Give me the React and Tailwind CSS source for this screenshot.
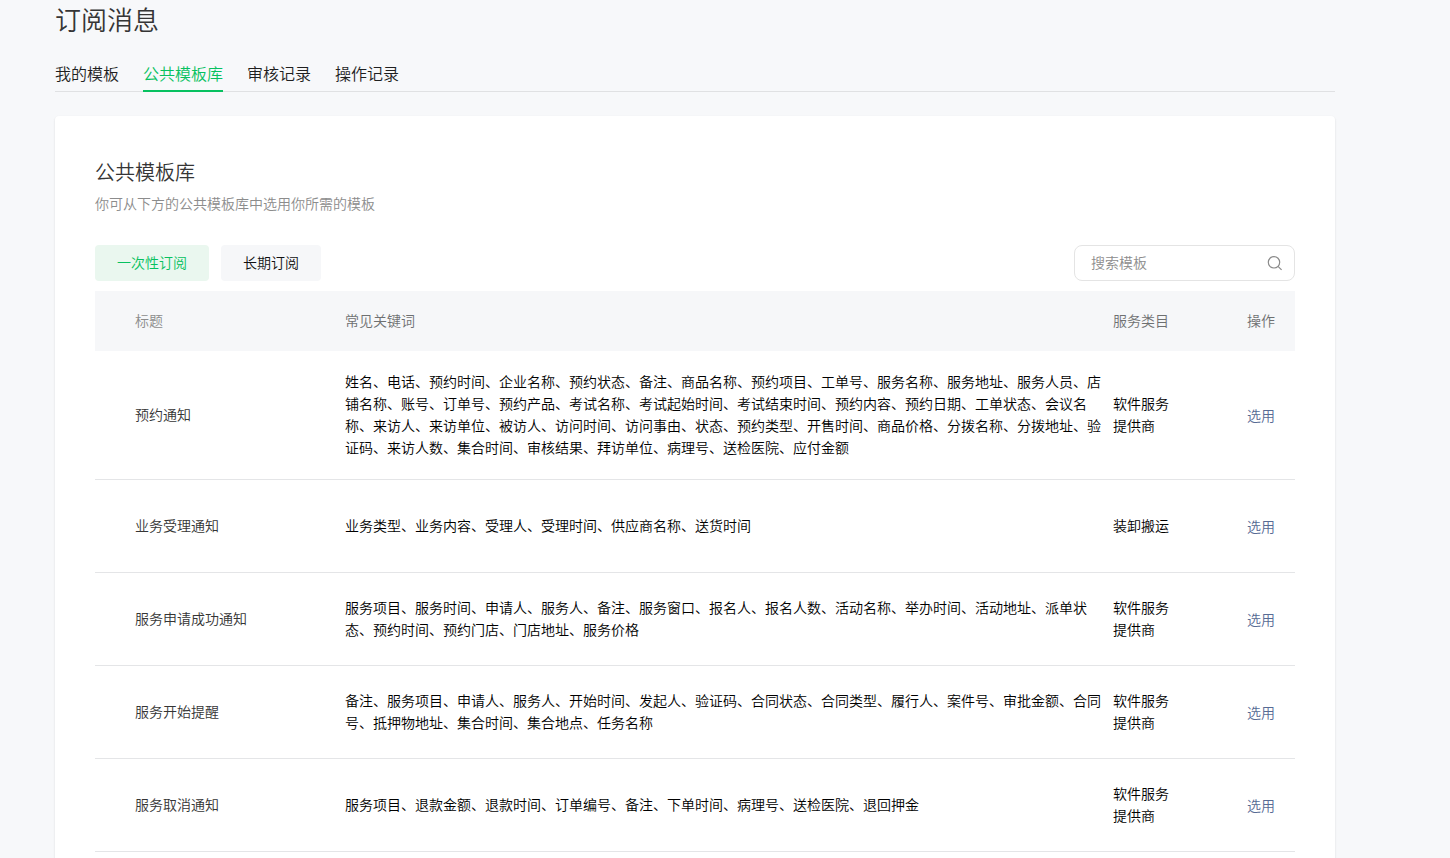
const tabs = ['我的模板', '公共模板库', '审核记录', '操作记录']

const templates = [
  {
    title: '预约通知',
    keywords:
      '姓名、电话、预约时间、企业名称、预约状态、备注、商品名称、预约项目、工单号、服务名称、服务地址、服务人员、店铺名称、账号、订单号、预约产品、考试名称、考试起始时间、考试结束时间、预约内容、预约日期、工单状态、会议名称、来访人、来访单位、被访人、访问时间、访问事由、状态、预约类型、开售时间、商品价格、分拨名称、分拨地址、验证码、来访人数、集合时间、审核结果、拜访单位、病理号、送检医院、应付金额',
    category: '软件服务提供商',
  },
  {
    title: '业务受理通知',
    keywords: '业务类型、业务内容、受理人、受理时间、供应商名称、送货时间',
    category: '装卸搬运',
  },
  {
    title: '服务申请成功通知',
    keywords:
      '服务项目、服务时间、申请人、服务人、备注、服务窗口、报名人、报名人数、活动名称、举办时间、活动地址、派单状态、预约时间、预约门店、门店地址、服务价格',
    category: '软件服务提供商',
  },
  {
    title: '服务开始提醒',
    keywords:
      '备注、服务项目、申请人、服务人、开始时间、发起人、验证码、合同状态、合同类型、履行人、案件号、审批金额、合同号、抵押物地址、集合时间、集合地点、任务名称',
    category: '软件服务提供商',
  },
  {
    title: '服务取消通知',
    keywords: '服务项目、退款金额、退款时间、订单编号、备注、下单时间、病理号、送检医院、退回押金',
    category: '软件服务提供商',
  },
]

function Tabs() {
  return (
    <nav className="mt-[21px] flex gap-6 border-b border-[#e0e1e3] text-base">
      {tabs.map((tab) => (
        <a
          key={tab}
          href="#"
          className={
            tab === '公共模板库'
              ? '-mb-px border-b-2 border-[#07c160] pb-[3px] leading-7 text-[#07c160]'
              : '-mb-px border-b-2 border-transparent pb-[3px] leading-7 text-[#1f1f1f]'
          }
        >
          {tab}
        </a>
      ))}
    </nav>
  )
}

function SearchBox() {
  return (
    <label className="flex h-9 w-[221px] items-center rounded-lg border border-[#e4e4e4] pl-4 pr-3">
      <input
        type="text"
        aria-label="搜索模板"
        placeholder="搜索模板"
        className="min-w-0 flex-1 bg-transparent pb-0.5 outline-none placeholder:text-[#8c8c8c]"
      />
      <svg className="size-4" viewBox="0 0 16 16" fill="none" stroke="#8a8a8a" strokeWidth="1.2">
        <circle cx="8" cy="7.3" r="5.7" />
        <path d="M12 11.3L15.6 14.9" />
      </svg>
    </label>
  )
}

function TemplateTable() {
  return (
    <table className="mt-2.5 w-full table-fixed text-left leading-[22px]">
      <thead>
        <tr className="h-15 bg-[#f6f7f9] text-[#6e7071]">
          <th className="w-[250px] pb-0.5 pl-10 font-[350] text-[#8c8c8c]">标题</th>
          <th className="pb-0.5 font-[350]">常见关键词</th>
          <th className="w-[84px] pb-0.5 font-[350]">服务类目</th>
          <th className="w-[98px] pb-0.5 pr-5 text-right font-[350]">操作</th>
        </tr>
      </thead>
      <tbody>
        {templates.map((item) => (
          <tr key={item.title} className="h-[93px] border-b border-[#e4e5e7] text-black">
            <td className="pt-[19px] pb-[21px] pl-10 text-[#353535]">{item.title}</td>
            <td className="pt-[19px] pr-2.5 pb-[21px]">{item.keywords}</td>
            <td className="pt-[19px] pr-5 pb-[21px]">{item.category}</td>
            <td className="py-5 pr-5 text-right">
              <a href="#" className="text-[#576b95]">选用</a>
            </td>
          </tr>
        ))}
      </tbody>
    </table>
  )
}

export default function App() {
  return (
    <div className="min-h-screen bg-[#f7f8fa] pl-[55px] pr-[115px] font-['Noto_Sans_CJK_SC',sans-serif] text-sm font-[350]">
      <h1 className="text-[26px] leading-[38px] text-[#353535]">订阅消息</h1>
      <Tabs />

      <main className="mt-6 rounded bg-white p-10 shadow-[0_1px_2px_rgba(150,150,150,0.3)]">
        <h2 className="text-xl leading-8 text-[#353535]">公共模板库</h2>
        <p className="mt-1 leading-[22px] text-[#8c8c8c]">你可从下方的公共模板库中选用你所需的模板</p>

        <div className="mt-[31px] flex items-center justify-between">
          <div className="flex gap-3">
            <button type="button" className="h-9 rounded bg-[#eaf7ef] px-[22px] pb-0.5 text-[#07c160]">
              一次性订阅
            </button>
            <button type="button" className="h-9 rounded bg-[#f6f7f9] px-[22px] pb-0.5 text-[#111]">
              长期订阅
            </button>
          </div>
          <SearchBox />
        </div>

        <TemplateTable />
      </main>
    </div>
  )
}
